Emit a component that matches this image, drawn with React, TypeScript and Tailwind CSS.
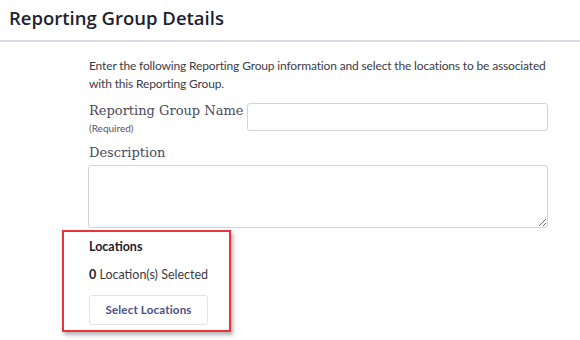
import React from 'react';

const sans = { fontFamily: 'Lato, "Open Sans", sans-serif' };

export default function App() {
  return (
    <div className="w-[580px] h-[340px] bg-white overflow-hidden" style={sans}>
      {/* Header */}
      <div className="h-[42px] border-b-2 border-[#dcdce2] pl-[9px] pt-[6px]">
        <h1 className="text-[18.5px] leading-[24px] font-semibold text-[#1c1f33] font-['Open_Sans',sans-serif]">
          Reporting Group Details
        </h1>
      </div>

      {/* Form body */}
      <div className="pl-[89px] pr-[32px] pt-[15px]">
        <p className="text-[12px] leading-[18px] text-[#3b3b45] tracking-[-0.15px] whitespace-nowrap">
          Enter the following Reporting Group information and select the locations to be associated
          <br />
          with this Reporting Group.
        </p>

        <div className="flex mt-[10px]">
          <div className="w-[158px] shrink-0">
            <div className="text-[13px] leading-[18px] text-[#4a4a58] font-['DejaVu_Serif',serif] -mt-px">Reporting Group Name</div>
            <div className="text-[10px] leading-[12px] text-[#55555f] mt-[2px]">(Required)</div>
          </div>
          <input className="flex-1 h-[28px] border border-[#d2d2de] rounded-[3px] outline-none" />
        </div>

        <div className="text-[13px] leading-[18px] text-[#4a4a58] font-['DejaVu_Serif',serif] mt-[10px]">Description</div>
        <textarea className="block w-[calc(100%+1px)] -ml-px h-[63px] mt-[3px] border border-[#d2d2de] rounded-[3px] outline-none resize-y" />

        {/* Locations (highlighted) */}
        <div className="w-[169px] -ml-[27px] mt-[2px] border-2 border-[#e8353b] pl-[25px] pt-[7px] pb-[5px] shadow-[2px_3px_4px_rgba(0,0,0,0.3)]">
          <div className="text-[12.5px] leading-[16px] font-bold text-[#1f2030]">Locations</div>
          <div className="text-[12.5px] leading-[16px] text-[#3b3b45] mt-[12px]">
            <span className="font-bold text-[#1f2030]">0</span> Location(s) Selected
          </div>
          <button className="mt-[12px] w-[119px] h-[30px] border border-[#e2e2ea] rounded-[3px] bg-white text-[11.5px] font-bold text-[#4b4f85] tracking-[0.2px]">
            Select Locations
          </button>
        </div>
      </div>
    </div>
  );
}
